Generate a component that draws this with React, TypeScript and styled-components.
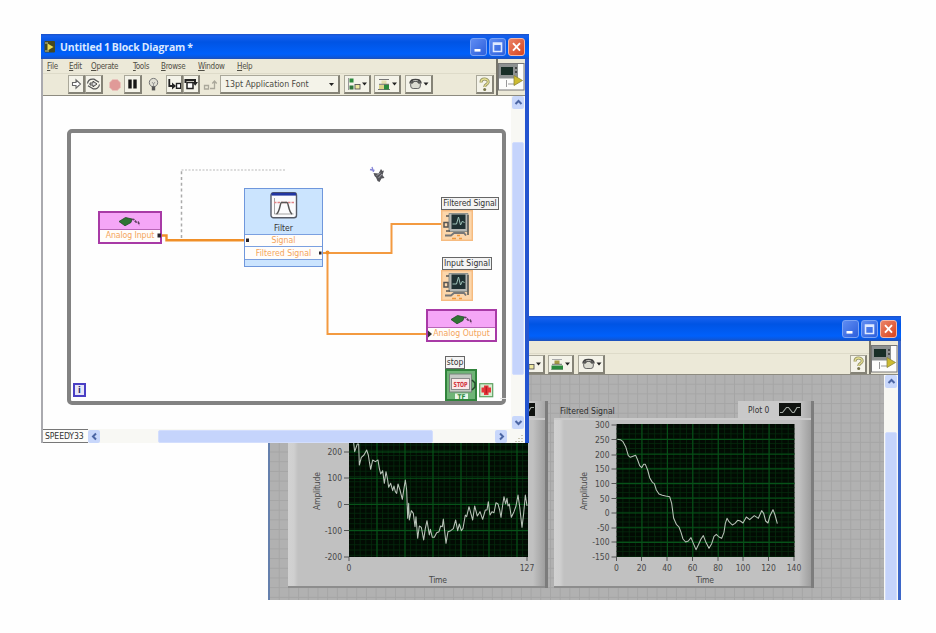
import React from "react";
import styled, { createGlobalStyle, css } from "styled-components";

const GlobalStyle = createGlobalStyle`
  body { margin: 0; background: #fefefe; }
  * { box-sizing: border-box; }
  svg { display: block; }
`;

const UI_FONT = `"DejaVu Sans Condensed", "Noto Sans", sans-serif`;

const Desktop = styled.main`
  position: relative;
  width: 936px;
  height: 633px;
  overflow: hidden;
  background: #fefefe;
  font-family: ${UI_FONT};
  font-size: 8.5px;
  color: #333;
`;

/* ---------- window chrome ---------- */

const Window = styled.section<{ $x: number; $y: number; $w: number; $h: number }>`
  position: absolute;
  left: ${(p) => p.$x}px;
  top: ${(p) => p.$y}px;
  width: ${(p) => p.$w}px;
  height: ${(p) => p.$h}px;
  display: flex;
  flex-direction: column;
  overflow: hidden;
`;

const TitleBar = styled.header`
  flex: none;
  height: 25px;
  display: flex;
  align-items: center;
  padding: 0 4px 0 3px;
  background: linear-gradient(#1c50c4 0, #1560ee 2px, #0054e4 8px, #0060fb 20px, #0a58e0 23px, #2350b4 25px);
`;

const Title = styled.h1`
  flex: 1;
  margin: 0 0 0 4px;
  font: 700 10.4px "Open Sans", sans-serif;
  letter-spacing: -0.1px;
  word-spacing: -0.6px;
  color: #dbe8ff;
  white-space: nowrap;
`;

const CaptionButtons = styled.div`
  display: flex;
  gap: 2px;
  margin-left: auto;
`;

const CaptionButton = styled.span<{ $close?: boolean }>`
  width: 17px;
  height: 18px;
  border: 1px solid ${(p) => (p.$close ? "#f2b7a8" : "#7aa2f4")};
  border-radius: 3px;
  background: ${(p) => (p.$close ? "linear-gradient(135deg, #ea8468, #d8441e)" : "linear-gradient(135deg, #5f8cf2, #2c5fdc)")};
`;

const Frame = styled.div<{ $left: string; $right: string; $rightWidth: number }>`
  flex: 1;
  min-height: 0;
  display: flex;
  flex-direction: column;
  border-left: 2px solid ${(p) => p.$left};
  border-right: ${(p) => p.$rightWidth}px solid ${(p) => p.$right};
`;

const Bars = styled.div<{ $h: number }>`
  flex: none;
  display: flex;
  height: ${(p) => p.$h}px;
  background: #ece9d8;
  border-bottom: 1px solid #8d8b80;
`;

const BarStack = styled.div`
  flex: 1;
  display: flex;
  flex-direction: column;
`;

const MenuBar = styled.nav<{ $h: number }>`
  flex: none;
  height: ${(p) => p.$h}px;
  display: flex;
  align-items: center;
  padding-left: 4px;
  font-size: 8px;
  color: #504e44;
  border-bottom: 1px solid #dedbc9;
`;

const MenuItem = styled.span<{ $w: number }>`
  width: ${(p) => p.$w}px;
  white-space: nowrap;
  letter-spacing: -0.3px;
  &::first-letter { text-decoration: underline; }
`;

const ToolBar = styled.div<{ $indent: number }>`
  flex: 1;
  display: flex;
  align-items: center;
  padding-left: ${(p) => p.$indent}px;
  padding-right: 2px;
`;

const Tool = styled.span<{ $w: number; $gap?: number; $flat?: boolean; $push?: boolean }>`
  flex: none;
  width: ${(p) => p.$w}px;
  height: 19px;
  margin-left: ${(p) => (p.$push ? "auto" : `${p.$gap ?? 0}px`)};
  display: flex;
  align-items: center;
  justify-content: center;
  ${(p) =>
    !p.$flat &&
    css`
      background: #f4f3e9;
      border: 1px solid #aaa89a;
      border-right: 2px solid #858377;
      border-bottom: 2px solid #858377;
    `}
`;

const FontSelect = styled(Tool)`
  justify-content: space-between;
  padding: 0 3px 0 4px;
  font-size: 8.8px;
  letter-spacing: -0.05px;
  color: #4c4b43;
`;

const IconPane = styled.div`
  flex: none;
  width: 29px;
  padding-top: 4px;
  border-left: 2px solid #77756b;
`;

const Content = styled.div`
  flex: 1;
  min-height: 0;
  display: flex;
`;

const VScroll = styled.div`
  flex: none;
  width: 14px;
  display: flex;
  flex-direction: column;
  align-items: center;
  background: #f8f8f4;
`;

const HScroll = styled.div`
  flex: none;
  height: 14px;
  display: flex;
  align-items: center;
  background: #f8f8f4;
`;

const ScrollButton = styled.span`
  flex: none;
  width: 12px;
  height: 13px;
  display: flex;
  align-items: center;
  justify-content: center;
  border-radius: 2px;
  background: #c8d7fb;
`;

const Thumb = styled.span<{ $w?: number; $h?: number; $before: number }>`
  flex: none;
  display: flex;
  align-items: center;
  justify-content: center;
  ${(p) =>
    p.$w
      ? css`width: ${p.$w}px; height: 13px; margin-left: ${p.$before}px;`
      : css`width: 12px; height: ${p.$h}px; margin-top: ${p.$before}px;`}
  border-radius: 2px;
  background: #c5d4fc;
  border: 1px solid #d3defd;
`;

const Spacer = styled.span`
  flex: 1;
`;

const Server = styled.span`
  width: 45px;
  height: 14px;
  padding-left: 2px;
  border-top: 1px solid #777;
  border-bottom: 1px solid #777;
  font-size: 8.6px;
  line-height: 12px;
  letter-spacing: -0.1px;
  background: #fcfcfa;
  overflow: hidden;
  white-space: nowrap;
`;

/* ---------- block diagram ---------- */

const Diagram = styled.div`
  position: relative;
  flex: 1;
  background: #fefefe;
`;

const Loop = styled.div`
  position: absolute;
  left: 24px;
  top: 33px;
  width: 439px;
  height: 276px;
  border: 4px solid #828282;
  border-radius: 5px;
`;

const Wires = styled.svg`
  position: absolute;
  left: 0;
  top: 0;
`;

const Item = styled.div<{ $x: number; $y: number; $w: number; $h: number }>`
  position: absolute;
  left: ${(p) => p.$x - 43}px;
  top: ${(p) => p.$y - 96}px;
  width: ${(p) => p.$w}px;
  height: ${(p) => p.$h}px;
`;

const DaqNode = styled(Item)`
  display: flex;
  flex-direction: column;
  border: 2px solid #a83aa6;
  background: #f5a6f7;
`;

const DaqHead = styled.div`
  flex: 1;
  display: flex;
  align-items: center;
  justify-content: center;
  border-bottom: 1px solid #b765b6;
`;

const PortText = styled.div<{ $h: number; $ls?: number }>`
  height: ${(p) => p.$h}px;
  line-height: ${(p) => p.$h - 1}px;
  background: #fffdfb;
  color: #f4a55c;
  text-align: center;
  white-space: nowrap;
  font-size: 8.7px;
  letter-spacing: ${(p) => p.$ls ?? 0}px;
`;

const FilterNode = styled(Item)`
  display: flex;
  flex-direction: column;
  border: 1px solid #6f97dc;
  background: #cbe4fe;
  & > ${PortText} { border-top: 1px solid #7ba0e0; }
`;

const FilterHead = styled.div`
  height: 45px;
  display: flex;
  flex-direction: column;
  align-items: center;
  justify-content: space-between;
  padding-top: 3px;
  font-size: 8.5px;
  line-height: 12px;
`;

const FilterFoot = styled.div`
  flex: 1;
  border-top: 1px solid #7ba0e0;
`;

const Label = styled(Item)<{ $ls?: number }>`
  border: 1px solid #666;
  background: #f4f4f4;
  font-size: 8.6px;
  line-height: 11px;
  text-align: center;
  white-space: nowrap;
  letter-spacing: ${(p) => p.$ls ?? 0}px;
`;

const Counter = styled(Item)`
  border: 2px solid #4a3fc4;
  background: #e6e6f8;
  color: #2a2a70;
  font-weight: 700;
  font-size: 9px;
  line-height: 10px;
  text-align: center;
`;

/* ---------- front panel ---------- */

const PanelCanvas = styled.div`
  flex: 1;
  display: flex;
  gap: 6px;
  padding: 26px 0 0 18px;
  background-color: #b1b1b1;
  background-image:
    linear-gradient(90deg, transparent 8.7px, #a5a5a5 8.7px),
    linear-gradient(transparent 8.7px, #a5a5a5 8.7px);
  background-size: 9.7px 9.7px;
`;

const Chart = styled.figure`
  flex: none;
  width: 260px;
  height: 187px;
  margin: 0;
  display: flex;
  flex-direction: column;
  border-right: 3px solid #7c7c7c;
`;

const ChartHead = styled.figcaption`
  flex: none;
  height: 17px;
  display: flex;
  align-items: stretch;
  justify-content: space-between;
`;

const ChartTitle = styled.span`
  padding: 4px 0 0 6px;
  font-size: 8.6px;
  line-height: 12px;
  letter-spacing: 0;
  color: #2d2d2d;
`;

const Legend = styled.span`
  width: 73px;
  padding: 0 10px;
  display: flex;
  align-items: center;
  justify-content: space-between;
  font-size: 8.4px;
  background: linear-gradient(90deg, #c9c9c9 80%, #a8a8a8);
`;

const ChartBody = styled.div`
  flex: 1;
  border-top: 2px solid #cacaca;
  border-bottom: 2px solid #8d8d8d;
  background: linear-gradient(90deg, #d2d2d2 0, #cfcfcf 6px, #c1c1c1 10px, #c1c1c1 245px, #9e9e9e 257px);
`;

/* ---------- drawings ---------- */

const MinimizeIcon = () => (
  <svg width="15" height="16"><rect x="3.5" y="10" width="6" height="2.6" fill="#fff" /></svg>
);
const MaximizeIcon = () => (
  <svg width="15" height="16"><path d="M3.5 4h8v8.5h-8zM3.5 5.2h8" fill="none" stroke="#dfe9ff" strokeWidth="1.6" /></svg>
);
const CloseIcon = () => (
  <svg width="15" height="16"><path d="M4 4.2l7 7.4M11 4.2l-7 7.4" stroke="#fff" strokeWidth="1.9" /></svg>
);
const AppIcon = () => (
  <svg width="12" height="14">
    <rect x="0.5" y="1" width="10.5" height="11.5" rx="1" fill="#46491f" />
    <path d="M3.5 3.5v7l6-3.5z" fill="#e9dc55" /><path d="M1 3h3M1 11h4" stroke="#c6c99b" />
  </svg>
);
const Arrow = ({ d }: { d: string }) => (
  <svg width="9" height="9"><path d={d} fill="none" stroke="#4c66a4" strokeWidth="2" /></svg>
);
const UP = "M1.5 6l3-3 3 3";
const DOWN = "M1.5 3l3 3 3-3";
const LEFT = "M6 1.5l-3 3 3 3";
const RIGHT = "M3 1.5l3 3-3 3";

const RunIcon = () => (
  <svg width="13" height="14"><path d="M2.5 5.5h3.500V2.800L10.500 7 6 11.200V8.500H2.500z" fill="#fff" stroke="#666" strokeWidth="1.1" /></svg>
);
const RunLoopIcon = () => (
  <svg width="15" height="14">
    <path d="M1.5 6.5C2 3 5 1.8 8 2.2l5 3M13.5 7.5C13 11 10 12.3 7 11.8l-5-3" fill="none" stroke="#555" strokeWidth="1.2" />
    <path d="M4 6h3V4.2L11 7l-4 2.8V8H4z" fill="#ddd" stroke="#444" />
  </svg>
);
const AbortIcon = () => (
  <svg width="14" height="14"><path d="M4.7 1.5h4.6L12.5 4.7v4.6L9.3 12.5H4.7L1.5 9.3V4.7z" fill="#e09a98" stroke="#e9c4bd" /></svg>
);
const PauseIcon = () => (
  <svg width="13" height="14"><path d="M2.3 2.5h3.400v9h-3.400zM7.300 2.500h3.400v9h-3.400z" fill="#161616" /></svg>
);
const BulbIcon = () => (
  <svg width="13" height="15">
    <circle cx="6.5" cy="5.6" r="4.200" fill="#e0dfd4" stroke="#777" />
    <path d="M5 5l1.5 2L8 5M6.5 7v3" fill="none" stroke="#888" strokeWidth="0.8" />
    <rect x="4.8" y="9.4" width="3.4" height="4" fill="#555" />
  </svg>
);
const StepIntoIcon = () => (
  <svg width="15" height="14">
    <path d="M2.300 2v7h3" fill="none" stroke="#222" strokeWidth="1.800" /><path d="M5 5.500v7l4-3.500z" fill="#222" />
    <rect x="9.5" y="6.5" width="4.200" height="4.800" fill="#fff" stroke="#222" strokeWidth="1.4" />
  </svg>
);
const StepOverIcon = () => (
  <svg width="15" height="14">
    <rect x="3" y="5.5" width="6" height="6" fill="#fff" stroke="#222" strokeWidth="1.500" />
    <path d="M1.500 6V3H11v3" fill="none" stroke="#222" strokeWidth="2" /><path d="M8.500 5h5.500l-2.800 3.800z" fill="#222" />
  </svg>
);
const StepOutIcon = () => (
  <svg width="15" height="14">
    <path d="M1.5 7.5h4v3.5h-4zM7 10.5h4.5V3.5M9.3 5.5l2.2-2.5 2.2 2.5" fill="none" stroke="#aaa89b" strokeWidth="1.3" />
  </svg>
);
const Caret = () => (
  <svg width="7" height="5"><path d="M1 1h5L3.5 4z" fill="#222" /></svg>
);
const AlignIcon = () => (
  <svg width="23" height="14">
    <path d="M2.5 1v12" stroke="#999" /><rect x="3.5" y="1.5" width="4" height="4" fill="#2c8a3c" />
    <rect x="3.5" y="8.5" width="4" height="4" fill="#31763c" /><rect x="9" y="7.5" width="5" height="4.5" fill="#eee8a0" stroke="#555" strokeWidth="0.9" />
    <path d="M16 5.5h5L18.500 8.500z" fill="#222" />
  </svg>
);
const DistributeIcon = ({ solid = false }: { solid?: boolean }) => (
  <svg width="23" height="14">
    <path d="M3 2.500h10M2 12.500h12" stroke={solid ? "#aaa" : "#777"} />
    <rect x="5.5" y="3.500" width="5" height="3.500" fill={solid ? "#a59a44" : "#e3deb0"} />
    {solid
      ? <rect x="2.500" y="8.500" width="11.500" height="4" fill="#2a8a3d" />
      : <path d="M3 8h5v4H3z" fill="#d9d389" />}
    {!solid && <rect x="8" y="7.500" width="5" height="5" fill="#2a8a3d" />}
    <path d="M3 7.300h10" stroke="#555" strokeWidth="0.800" />
    <path d="M16 5.500h5L18.500 8.500z" fill="#222" />
  </svg>
);
const ReorderIcon = () => (
  <svg width="23" height="14">
    <path d="M3 6.500c0-3.500 3-4 5.500-4s5.500 .5 5.500 4" fill="none" stroke="#444" strokeWidth="1.500" />
    <rect x="3.700" y="4.500" width="9.600" height="7" rx="2.500" fill="#dcdcd2" stroke="#666" /><path d="M5 2.500v4l2-2M12 2.500v4l-2-2" fill="none" stroke="#333" />
    <path d="M16.500 5.500h5L19 8.500z" fill="#222" />
  </svg>
);
const HelpIcon = () => (
  <svg width="13" height="15">
    <path d="M3 5.500C3 2.500 5 2 6.500 2S10.500 2.800 10.200 5.300C9.800 7.500 6.800 7 6.700 10" fill="none" stroke="#918f62" strokeWidth="3" />
    <path d="M3 5.500C3 2.500 5 2 6.500 2S10.500 2.800 10.200 5.300C9.800 7.500 6.800 7 6.700 10" fill="none" stroke="#e6e092" strokeWidth="1.300" />
    <circle cx="6.700" cy="12.500" r="1.500" fill="#77754c" />
  </svg>
);
const ViIcon = () => (
  <svg width="27" height="28">
    <rect x="0.500" y="0.500" width="25.500" height="26.500" fill="#fdfdfb" stroke="#777" />
    <rect x="1" y="1" width="19" height="14.500" fill="#8d9191" /><rect x="3" y="4" width="12" height="8" fill="#182e27" />
    <path d="M17 5h2M17 9h2" stroke="#333" strokeWidth="1.500" /><path d="M8.500 17v7M10 21h6" stroke="#999" />
    <path d="M16 12.500l8.500 5-8.500 5z" fill="#cdbb30" stroke="#8c8539" strokeWidth="0.800" />
  </svg>
);
const BoardIcon = () => (
  <svg width="24" height="11">
    <path d="M1 5.500L7.500 1.500l6.500 1.500-1 3.500L7 9.800z" fill="#2f7433" stroke="#1d4d25" strokeWidth="0.800" />
    <path d="M14 3.500c3-1 3 3 5 2.500s1.500 2.500 3 2.500" fill="none" stroke="#634063" strokeWidth="1.800" strokeDasharray="2.500 0.800" />
  </svg>
);
const FilterIcon = () => (
  <svg width="28" height="27">
    <rect x="1" y="0.800" width="25.500" height="25" rx="2.500" fill="#fbfbfd" stroke="#555a66" strokeWidth="1.400" />
    <rect x="1.500" y="0.800" width="24.500" height="2.800" fill="#2135a1" />
    <path d="M4.500 6v16h19" fill="none" stroke="#999" strokeWidth="0.900" />
    <path d="M4 10.500h20" stroke="#df8588" strokeWidth="1.300" strokeDasharray="2.500 1" />
    <path d="M6.500 22C10 20 10 10.500 11.500 10.500H17C18.500 10.500 18.500 20 22 22" fill="none" stroke="#555" strokeWidth="1.500" />
  </svg>
);
const ScopeIcon = () => (
  <svg width="32" height="31">
    <rect x="0.700" y="0.700" width="30.600" height="29.600" fill="#fcd6ab" stroke="#f6bb80" strokeWidth="1.400" />
    <path d="M8 3.500h19v18H8z" fill="#b4b6b3" stroke="#8b8f8b" /><path d="M27 5v20" stroke="#5c5e5b" strokeWidth="1.600" />
    <rect x="10.500" y="4.500" width="14" height="14.500" fill="#203133" />
    <path d="M11.500 14h4l2-7 2 8 2-4 2 2" fill="none" stroke="#9fc4ba" />
    <path d="M5 6h3M3 12.500h4v4.500H3zM5 21h4" fill="none" stroke="#555" strokeWidth="1.500" />
    <path d="M4 25.500h6l3-2.500h10l2 2.500" fill="none" stroke="#777" strokeWidth="1.800" />
    <path d="M11 28.500h4M18 28.500h3M16 25.500h3" stroke="#ee973e" strokeWidth="1.300" />
  </svg>
);
const StopTerminal = () => (
  <svg width="32" height="32">
    <rect x="1" y="1" width="30" height="30" fill="#6fb476" stroke="#31843c" strokeWidth="2" />
    <rect x="4.500" y="5" width="22" height="18" fill="#c5c9c4" stroke="#77847a" />
    <rect x="6.500" y="9.500" width="18" height="11" fill="#fbe9e9" stroke="#8b8b8b" />
    <text x="15.500" y="17.800" fontSize="7" fontWeight="700" textAnchor="middle" textLength="14" lengthAdjust="spacingAndGlyphs" fill="#d2303a" fontFamily={UI_FONT}>STOP</text>
    <path d="M27 11l3 3v4l-3 3" fill="none" stroke="#24492b" strokeWidth="1.500" />
    <rect x="10" y="24.500" width="13" height="5.500" fill="#eaf6ea" />
    <text x="16.500" y="29.700" fontSize="6.500" fontWeight="700" textAnchor="middle" fill="#2c8a3b" fontFamily={UI_FONT}>TF</text>
  </svg>
);
const StopCondition = () => (
  <svg width="15" height="15">
    <rect x="0.700" y="0.700" width="13" height="13" fill="#d6ecd0" stroke="#5fa262" strokeWidth="1.200" />
    <path d="M5 2.500h4.500v2h2.500v5H9.500v2.500H5V9.500H2.500v-5H5z" fill="#e5353a" /><path d="M7.300 3.500v7" stroke="#b81d22" strokeWidth="1.500" />
  </svg>
);
const SpoolCursor = () => (
  <svg width="18" height="18">
    <path d="M1 3.500l4.500 1M3 1l1.500 5" stroke="#8585d6" strokeWidth="1.300" />
    <path d="M4.500 7l5 .5L12 3l1.500 2 1.500-.5L14.500 6l-1 3L15.500 12l-3 .5-2 3.500-2-1-1.500-3.500L5.500 10z" fill="#55555a" />
    <path d="M7.500 9.500l4-2.500M9.500 12l3.500-4" stroke="#a5a5ae" strokeWidth="0.900" />
  </svg>
);
const LegendIcon = () => (
  <svg width="22" height="13"><rect width="22" height="13" fill="#101310" /><path d="M1 9.500h2.500l4-5h2l4 5h1.500l3-5h3" fill="none" stroke="#a8afa8" strokeWidth="1.100" /></svg>
);

function CaptionSet() {
  return (
    <CaptionButtons>
      <CaptionButton><MinimizeIcon /></CaptionButton>
      <CaptionButton><MaximizeIcon /></CaptionButton>
      <CaptionButton $close><CloseIcon /></CaptionButton>
    </CaptionButtons>
  );
}

/* ---------- plots ---------- */

type Tick = [position: number, label: string];
type PlotProps = {
  originX: number;
  left: number;
  right: number;
  yTicks: Tick[];
  xTicks: Tick[];
  stepX: number;
  stepY: number;
  majorX: number;
  majorY: number;
  majorYStart: number;
  labelX: number;
  timeX: number;
  trace: number[];
  offset: [number, number];
};

const line = (start: number, end: number, step: number) => {
  const out: number[] = [];
  for (let v = start; v < end; v += step) out.push(v);
  return out;
};

function Plot(p: PlotProps) {
  const top = 424;
  const bottom = 557;
  const points: string[] = [];
  for (let i = 0; i < p.trace.length; i += 2) {
    points.push(`${p.offset[0] + p.trace[i] / 3},${p.offset[1] + p.trace[i + 1] / 3}`);
  }
  return (
    <svg width="257" height="166" viewBox={`${p.originX} 420 257 166`} fontFamily={UI_FONT} fontSize="8.5" fill="#484848">
      <rect x={p.left} y={top} width={p.right - p.left} height={bottom - top} fill="#020b03" />
      <g stroke="#062b0e" strokeWidth="0.8">
        {line(p.left + p.stepX, p.right, p.stepX).map((x) => <path key={x} d={`M${x} ${top}V${bottom}`} />)}
        {line(top + p.stepY, bottom, p.stepY).map((y) => <path key={y} d={`M${p.left} ${y}H${p.right}`} />)}
      </g>
      <g stroke="#075219" strokeWidth="1.1">
        {line(p.left + p.majorX, p.right - 1, p.majorX).map((x) => <path key={x} d={`M${x} ${top}V${bottom}`} />)}
        {line(p.majorYStart, bottom - 1, p.majorY).map((y) => <path key={y} d={`M${p.left} ${y}H${p.right}`} />)}
      </g>
      <polyline points={points.join(" ")} fill="none" stroke="#b9c4b9" strokeWidth="1.05" strokeLinejoin="round" />
      {p.yTicks.map(([y, label]) => (
        <g key={label}>
          <path d={`M${p.left - 5} ${y}H${p.left}`} stroke="#555" />
          <text x={p.left - 7} y={y + 3} textAnchor="end">{label}</text>
        </g>
      ))}
      {p.xTicks.map(([x, label]) => (
        <g key={label}>
          <path d={`M${x} ${bottom}v4`} stroke="#555" />
          <text x={x} y={571} textAnchor="middle">{label}</text>
        </g>
      ))}
      <text transform={`translate(${p.labelX} 491) rotate(-90)`} textAnchor="middle" textLength="38">Amplitude</text>
      <text x={p.timeX} y="583" textAnchor="middle" textLength="18">Time</text>
    </svg>
  );
}

const RAW = [
  280, 120, 284, 155, 292, 132, 296, 132, 298, 195, 304, 172, 312, 165, 320, 150, 325, 165, 328, 185, 332, 208, 338, 180,
  346, 185, 354, 180, 358, 205, 362, 222, 368, 212, 373, 250, 378, 215, 383, 240, 386, 262, 392, 250, 398, 272, 402, 258,
  406, 275, 410, 280, 414, 252, 420, 270, 427, 298, 432, 265, 436, 240, 440, 270, 443, 355, 446, 310, 448, 360, 454, 332,
  460, 340, 465, 380, 468, 350, 473, 415, 478, 378, 484, 382, 491, 420, 496, 385, 501, 362, 508, 405, 511, 388, 517, 412,
  523, 412, 530, 398, 537, 395, 542, 378, 547, 380, 550, 357, 558, 430, 564, 395, 572, 392, 580, 386, 587, 360, 593, 392,
  598, 372, 604, 392, 609, 385, 616, 345, 620, 350, 627, 320, 632, 338, 638, 360, 644, 318, 652, 348, 660, 335, 668, 358,
  676, 330, 681, 330, 685, 305, 690, 345, 696, 335, 702, 338, 708, 308, 714, 312, 719, 330, 723, 352, 728, 315, 732, 290,
  737, 312, 741, 295, 744, 318, 748, 312, 754, 352, 762, 335, 768, 318, 774, 285, 779, 320, 786, 382, 791, 340, 796, 285,
  801, 318,
];

const FILTERED = [
  217, 133, 226, 134, 234, 140, 242, 155, 250, 182, 256, 187, 264, 184, 272, 181, 278, 195, 284, 212, 290, 218, 296, 208,
  301, 208, 308, 225, 314, 248, 322, 262, 328, 266, 334, 285, 342, 297, 352, 301, 362, 303, 374, 305, 380, 325, 386, 370,
  394, 388, 402, 396, 408, 412, 414, 432, 422, 441, 430, 438, 438, 428, 445, 445, 453, 464, 461, 448, 468, 432, 475, 422,
  482, 440, 492, 460, 500, 446, 507, 424, 514, 418, 522, 426, 530, 430, 537, 412, 541, 385, 546, 370, 552, 380, 562, 390,
  570, 385, 578, 376, 586, 378, 594, 384, 604, 366, 614, 374, 628, 362, 640, 370, 650, 347, 656, 355, 662, 378, 669, 384,
  675, 362, 684, 344, 690, 360, 697, 386,
];

function ChartFrame({ title, children }: { title: string; children: React.ReactNode }) {
  return (
    <Chart>
      <ChartHead>
        <ChartTitle>{title}</ChartTitle>
        <Legend>Plot 0<LegendIcon /></Legend>
      </ChartHead>
      <ChartBody>{children}</ChartBody>
    </Chart>
  );
}

/* ---------- windows ---------- */

function FrontPanelWindow() {
  return (
    <Window $x={268} $y={316} $w={633} $h={284}>
      <TitleBar><CaptionSet /></TitleBar>
      <Frame $left="#6580ad" $right="#3c66c8" $rightWidth={3}>
        <Bars $h={34}>
          <BarStack>
            <MenuBar $h={13} />
            <ToolBar $indent={248}>
              <Tool $w={27}><AlignIcon /></Tool>
              <Tool $w={26} $gap={3}><DistributeIcon solid /></Tool>
              <Tool $w={27} $gap={4}><ReorderIcon /></Tool>
              <Tool $w={17} $push><HelpIcon /></Tool>
            </ToolBar>
          </BarStack>
          <IconPane><ViIcon /></IconPane>
        </Bars>
        <Content>
          <PanelCanvas>
            <ChartFrame title="">
              <Plot
                originX={288} left={349} right={528}
                yTicks={[[452, "200"], [478, "100"], [504.5, "0"], [530.5, "-100"], [557, "-200"]]}
                xTicks={[[349, "0"], [527, "127"]]}
                stepX={5.6} stepY={5.25} majorX={28} majorY={26.2} majorYStart={452}
                labelX={320} timeX={438} trace={RAW} offset={[260, 400]}
              />
            </ChartFrame>
            <ChartFrame title="Filtered Signal">
              <Plot
                originX={554} left={616.5} right={794.5}
                yTicks={[
                  [425, "300"], [439.5, "250"], [455, "200"], [469, "150"], [483.5, "100"],
                  [498.5, "50"], [513, "0"], [528, "-50"], [542, "-100"], [557, "-150"],
                ]}
                xTicks={[
                  [616.5, "0"], [641.5, "20"], [667, "40"], [692.5, "60"],
                  [718, "80"], [743, "100"], [768.5, "120"], [794, "140"],
                ]}
                stepX={6.36} stepY={4.9} majorX={25.43} majorY={14.7} majorYStart={439.5}
                labelX={586.5} timeX={705} trace={FILTERED} offset={[545, 395]}
              />
            </ChartFrame>
          </PanelCanvas>
          <VScroll>
            <ScrollButton><Arrow d={UP} /></ScrollButton>
            <Thumb $h={180} $before={44} />
          </VScroll>
        </Content>
      </Frame>
    </Window>
  );
}

function BlockDiagramWindow() {
  return (
    <Window $x={41} $y={34} $w={488} $h={409}>
      <TitleBar>
        <AppIcon />
        <Title>Untitled 1 Block Diagram *</Title>
        <CaptionSet />
      </TitleBar>
      <Frame $left="#aaaaaf" $right="#2455cf" $rightWidth={4}>
        <Bars $h={37}>
          <BarStack>
            <MenuBar $h={15}>
              <MenuItem $w={22}>File</MenuItem>
              <MenuItem $w={22}>Edit</MenuItem>
              <MenuItem $w={42}>Operate</MenuItem>
              <MenuItem $w={28}>Tools</MenuItem>
              <MenuItem $w={37}>Browse</MenuItem>
              <MenuItem $w={39}>Window</MenuItem>
              <MenuItem $w={20}>Help</MenuItem>
            </MenuBar>
            <ToolBar $indent={25}>
              <Tool $w={17}><RunIcon /></Tool>
              <Tool $w={18}><RunLoopIcon /></Tool>
              <Tool $w={17} $gap={3} $flat><AbortIcon /></Tool>
              <Tool $w={18} $gap={1}><PauseIcon /></Tool>
              <Tool $w={18} $gap={2} $flat><BulbIcon /></Tool>
              <Tool $w={17} $gap={4}><StepIntoIcon /></Tool>
              <Tool $w={17}><StepOverIcon /></Tool>
              <Tool $w={18} $gap={1} $flat><StepOutIcon /></Tool>
              <FontSelect $w={120} $gap={1}>13pt Application Font<Caret /></FontSelect>
              <Tool $w={27} $gap={4}><AlignIcon /></Tool>
              <Tool $w={27} $gap={3}><DistributeIcon /></Tool>
              <Tool $w={28} $gap={4}><ReorderIcon /></Tool>
              <Tool $w={18} $push><HelpIcon /></Tool>
            </ToolBar>
          </BarStack>
          <IconPane><ViIcon /></IconPane>
        </Bars>
        <Content>
          <Diagram>
            <Loop />
            <Wires width="468" height="332" viewBox="43 96 468 332" fill="none">
              <path d="M181.500 238V170" stroke="#aaa" strokeWidth="1.500" strokeDasharray="3 2.800" />
              <path d="M181.500 170H285" stroke="#b9b9b9" strokeDasharray="2 1.500" />
              <path d="M161 235.500H166.500V240.300H247" stroke="#f08f28" strokeWidth="2.400" />
              <path d="M322 253H391.500V224H442" stroke="#f39a40" strokeWidth="2" />
              <path d="M327.500 253V334H428" stroke="#f39a40" strokeWidth="2" />
              <circle cx="327.500" cy="252.500" r="2" fill="#f08f28" />
            </Wires>
            <Item $x={369} $y={166} $w={18} $h={18}><SpoolCursor /></Item>
            <DaqNode $x={98} $y={211} $w={64} $h={33}>
              <DaqHead><BoardIcon /></DaqHead>
              <PortText $h={12} $ls={-0.1}>Analog Input</PortText>
            </DaqNode>
            <FilterNode $x={244} $y={188} $w={79} $h={79}>
              <FilterHead><FilterIcon />Filter</FilterHead>
              <PortText $h={12}>Signal</PortText>
              <PortText $h={13}>Filtered Signal</PortText>
              <FilterFoot />
            </FilterNode>
            <Label $x={441} $y={197} $w={58} $h={13} $ls={-0.1}>Filtered Signal</Label>
            <Item $x={441} $y={210} $w={32} $h={31}><ScopeIcon /></Item>
            <Label $x={442} $y={257} $w={50} $h={13}>Input Signal</Label>
            <Item $x={441} $y={270} $w={32} $h={31}><ScopeIcon /></Item>
            <DaqNode $x={426} $y={309} $w={71} $h={33}>
              <DaqHead><BoardIcon /></DaqHead>
              <PortText $h={12}>Analog Output</PortText>
            </DaqNode>
            <Label $x={445} $y={356} $w={20} $h={13}>stop</Label>
            <Item $x={445} $y={369} $w={32} $h={32}><StopTerminal /></Item>
            <Item $x={479} $y={383} $w={15} $h={15}><StopCondition /></Item>
            <Counter $x={73} $y={383} $w={13} $h={14}>i</Counter>
            <Wires width="468" height="332" viewBox="43 96 468 332">
              <path d="M157.500 233.500h3.500v4h-3.500zM246 238.500h3v3.500h-3zM319 251.500h2.500v3h-2.500z" fill="#26222a" />
              <path d="M428 330.500l4 3.500-4 3.500z" fill="#333" />
              <path d="M500 398.500h6" stroke="#e2e2e2" strokeWidth="1" />
            </Wires>
          </Diagram>
          <VScroll>
            <ScrollButton><Arrow d={UP} /></ScrollButton>
            <Thumb $h={233} $before={33} />
            <Spacer />
            <ScrollButton><Arrow d={DOWN} /></ScrollButton>
          </VScroll>
        </Content>
        <HScroll>
          <Server>SPEEDY33</Server>
          <ScrollButton><Arrow d={LEFT} /></ScrollButton>
          <Thumb $w={275} $before={58} />
          <Spacer />
          <ScrollButton><Arrow d={RIGHT} /></ScrollButton>
          <svg width="18" height="13"><path d="M15 5v1M12 8v1M15 8v1M9 11v1M12 11v1M15 11v1" stroke="#bbb79e" strokeWidth="1.500" /></svg>
        </HScroll>
      </Frame>
    </Window>
  );
}

export default function App() {
  return (
    <Desktop>
      <GlobalStyle />
      <FrontPanelWindow />
      <BlockDiagramWindow />
    </Desktop>
  );
}
